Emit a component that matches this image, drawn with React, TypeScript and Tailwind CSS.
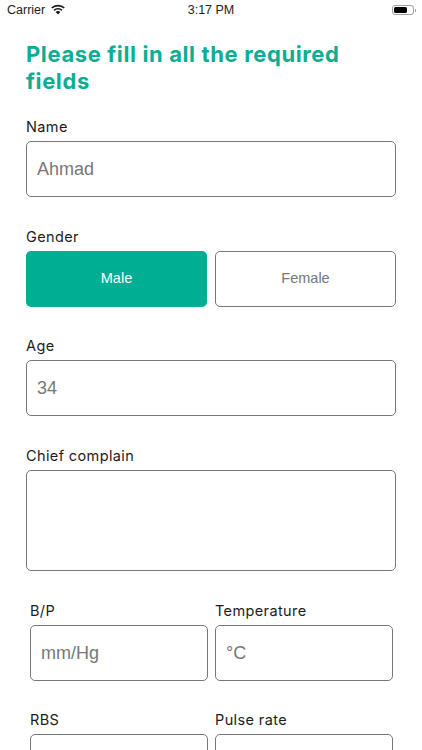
const labelFont = "text-[14.5px] leading-[18px] tracking-[0.38px] text-[#1c1c1c] font-['Inter','Liberation_Sans',sans-serif]";
const boxBorder = "rounded-[5px] border border-[#777777] bg-white";

function Field({ label, value, className = "h-[56px]" }: { label: string; value?: string; className?: string }) {
  return (
    <div className="flex flex-col gap-[5px]">
      <span className={labelFont}>{label}</span>
      <div className={`${boxBorder} ${className} flex items-center px-[10px] text-[18px] text-[#777777] font-['Liberation_Sans',sans-serif]`}>
        {value}
      </div>
    </div>
  );
}

function StatusBar() {
  return (
    <div className="relative flex h-[20px] items-center justify-between pl-[7px] pr-[6px] text-[12.5px] text-[#222222] font-['Liberation_Sans',sans-serif]">
      <div className="flex items-center gap-[5px]">
        <span>Carrier</span>
        <svg width="16" height="12" viewBox="0 0 16 12" fill="#111111">
          <path d="M8 2.4c2.2 0 4.2.8 5.7 2.2l1.1-1.2A10 10 0 0 0 8 .7a10 10 0 0 0-6.8 2.7l1.1 1.2A8.3 8.3 0 0 1 8 2.4z" />
          <path d="M8 5.6c1.3 0 2.5.5 3.4 1.3l1.1-1.2A6.6 6.6 0 0 0 8 3.9a6.6 6.6 0 0 0-4.5 1.8l1.1 1.2c.9-.8 2.1-1.3 3.4-1.3z" />
          <path d="M8 7.1c-.9 0-1.7.3-2.3.9L8 10.6 10.3 8c-.6-.6-1.4-.9-2.3-.9z" />
        </svg>
      </div>
      <span className="absolute left-0 right-0 text-center text-[12.5px]">3:17 PM</span>
      <div className="flex items-center gap-[1px]">
        <div className="flex h-[10px] w-[22px] items-center rounded-[3px] border border-[#a0a0a0] p-[1px]">
          <div className="h-full w-[13px] rounded-[1.5px] bg-black" />
        </div>
        <div className="h-[3px] w-[1px] bg-[#a0a0a0]" />
      </div>
    </div>
  );
}

export default function App() {
  return (
    <div className="h-[750px] w-[422px] overflow-hidden bg-white">
      <StatusBar />
      <div className="flex flex-col px-[26px] pt-[21px]">
        <h1 className="text-[22px] leading-[27px] font-bold tracking-[0.62px] text-[#0cad92] font-['Inter','Liberation_Sans',sans-serif]">
          Please fill in all the required fields
        </h1>
        <div className="mt-[23px]">
          <Field label="Name" value="Ahmad" />
        </div>
        <div className="mt-[31px] flex flex-col gap-[5px]">
          <span className={labelFont}>Gender</span>
          <div className="grid grid-cols-2 gap-[8px]">
            <div className="flex h-[56px] items-center justify-center rounded-[5px] bg-[#00ae93] text-[14.5px] text-white font-['Liberation_Sans',sans-serif]">
              Male
            </div>
            <div className={`${boxBorder} flex h-[56px] items-center justify-center text-[14.5px] text-[#777777] font-['Liberation_Sans',sans-serif]`}>
              Female
            </div>
          </div>
        </div>
        <div className="mt-[30px]">
          <Field label="Age" value="34" />
        </div>
        <div className="mt-[31px]">
          <Field label="Chief complain" className="h-[101px]" />
        </div>
        <div className="mt-[31px] grid grid-cols-[178px_178px] gap-x-[7px] gap-y-[30px] px-[4px]">
          <Field label="B/P" value="mm/Hg" />
          <Field label="Temperature" value="°C" />
          <Field label="RBS" />
          <Field label="Pulse rate" />
        </div>
      </div>
    </div>
  );
}
